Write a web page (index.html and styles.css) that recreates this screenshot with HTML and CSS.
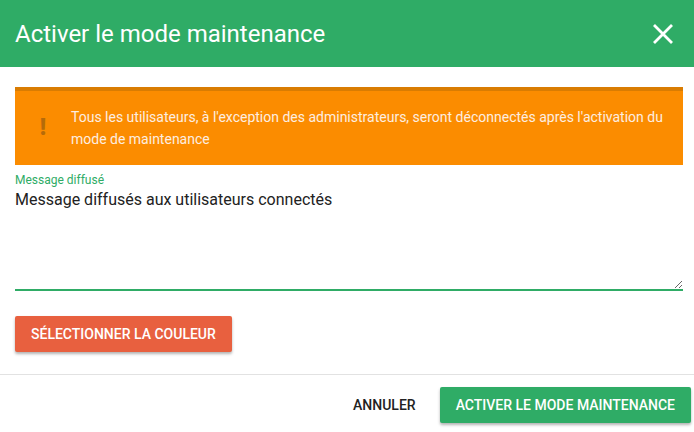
FILE: index.html
```html
<!DOCTYPE html>
<html lang="fr">
<head>
<meta charset="utf-8">
<link rel="stylesheet" href="styles.css">
</head>
<body>
<div class="dialog">
  <header class="dialog-header">
    <h1 class="dialog-title">Activer le mode maintenance</h1>
    <button class="close-btn" aria-label="Fermer">
      <svg width="22" height="22" viewBox="0 0 22 22"><path d="M2 2 L20 20 M20 2 L2 20" stroke="#fff" stroke-width="2.8" fill="none"/></svg>
    </button>
  </header>
  <div class="dialog-body">
    <div class="alert">
      <div class="alert-icon">!</div>
      <div class="alert-text">Tous les utilisateurs, à l'exception des administrateurs, seront déconnectés après l'activation du mode de maintenance</div>
    </div>
    <div class="field">
      <label class="field-label">Message diffusé</label>
      <textarea class="field-input">Message diffusés aux utilisateurs connectés</textarea>
    </div>
    <div class="color-row">
      <button class="btn btn-red">Sélectionner la couleur</button>
    </div>
  </div>
  <footer class="dialog-footer">
    <button class="btn btn-flat">Annuler</button>
    <button class="btn btn-green">Activer le mode maintenance</button>
  </footer>
</div>
</body>
</html>
```

FILE: styles.css
```css
* { box-sizing: border-box; }
html, body { margin: 0; padding: 0; background: #fff; }
body { font-family: Roboto, "Noto Sans", sans-serif; width: 694px; height: 432px; overflow: hidden; }

.dialog { display: flex; flex-direction: column; }

.dialog-header {
  height: 67px;
  background: #2fac66;
  display: flex;
  align-items: center;
  justify-content: space-between;
  padding: 0 15px 0 15px;
}
.dialog-title {
  margin: 0;
  font-weight: 400;
  font-size: 24px;
  color: #fff;
  letter-spacing: 0;
}
.close-btn {
  background: none;
  border: 0;
  padding: 0;
  width: 22px;
  height: 22px;
  margin-right: 5px;
  display: flex;
}

.dialog-body { padding: 20px 11px 0 15px; }

.alert {
  background: #fb8c00;
  border-top: 4px solid #d97c02;
  display: flex;
  align-items: center;
  padding: 15px 15px 15px 0;
}
.alert-icon {
  width: 56px;
  flex: none;
  text-align: center;
  color: #b56b0a;
  font-weight: 900;
  font-size: 23px;
  line-height: 22px;
}
.alert-text {
  color: #fdeee0;
  font-size: 14px;
  line-height: 22px;
}

.field {
  display: flex;
  flex-direction: column;
  margin-top: 8px;
}
.field-label {
  color: #2fac66;
  font-size: 12px;
  line-height: 14px;
}
.field-input {
  font-family: Roboto, "Noto Sans", sans-serif;
  font-size: 16px;
  color: #222;
  border: 0;
  border-bottom: 2px solid #2fac66;
  padding: 3px 0 0 0;
  margin: 0;
  height: 104px;
  line-height: 20px;
  outline: none;
  resize: vertical;
}

.color-row { margin-top: 25px; }

.btn {
  font-family: Roboto, "Noto Sans", sans-serif;
  font-size: 14px;
  font-weight: 500;
  text-transform: uppercase;
  border: 0;
  border-radius: 2px;
  height: 36px;
  padding: 0 16px;
  cursor: pointer;
}
.btn-red {
  background: #e8603f;
  color: #fff;
  box-shadow: 0 2px 3px rgba(0,0,0,0.3);
}
.dialog-footer {
  margin-top: 22px;
  border-top: 1px solid #e2e2e2;
  display: flex;
  justify-content: flex-end;
  align-items: center;
  gap: 8px;
  padding: 12px 3px 0 0;
}
.btn-flat {
  background: none;
  color: #222;
}
.btn-green {
  background: #2fac66;
  color: #fff;
  box-shadow: 0 2px 3px rgba(0,0,0,0.3);
}
```
